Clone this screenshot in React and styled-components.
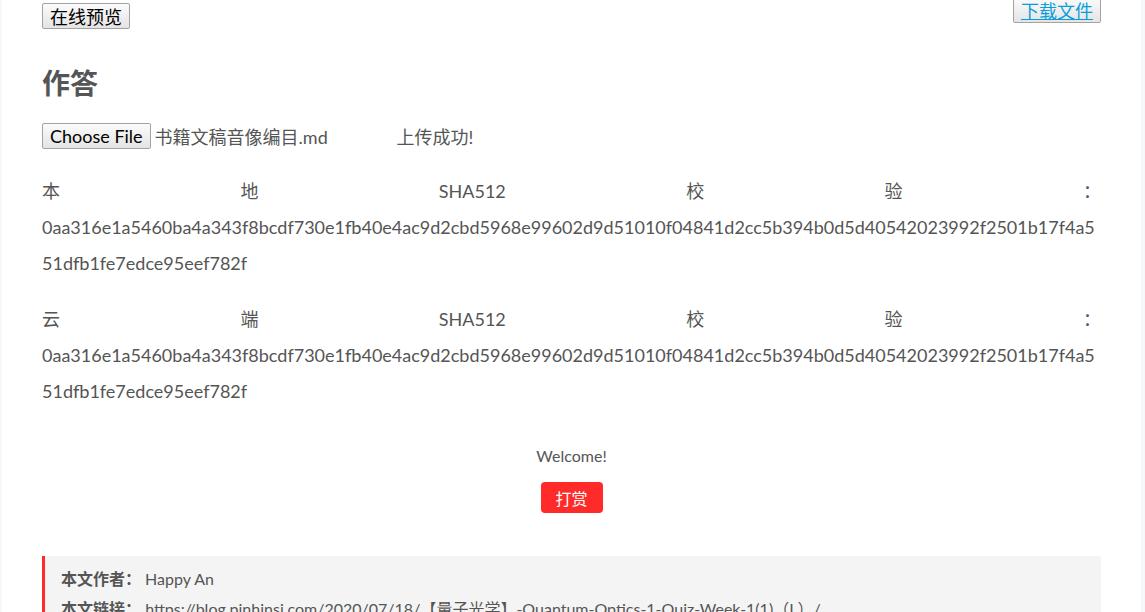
import React from "react";
import styled, { createGlobalStyle } from "styled-components";

const GlobalStyle = createGlobalStyle`
  html, body {
    margin: 0;
    padding: 0;
    background: #f5f7f9;
    overflow: hidden;
  }
  body {
    font-family: Lato, "Noto Sans CJK SC", sans-serif;
    color: #555;
  }
`;

const Page = styled.div`
  margin: 0 4px 0 2px;
  min-height: 612px;
  background: #fff;
  padding: 0 40px;
  box-sizing: border-box;
`;

const Toolbar = styled.div`
  display: flex;
  justify-content: space-between;
  align-items: flex-start;
  margin-top: -3px;
`;

const NativeButton = styled.button`
  font-family: "Noto Sans CJK SC", sans-serif;
  font-size: 18px;
  line-height: 22px;
  height: 26px;
  width: 88px;
  padding: 0;
  margin-top: ${(p) => p.$offset || 0}px;
  color: #000;
  background: linear-gradient(#fbfbfb, #e4e4e4);
  border: 1px solid #a3a3a3;
  border-radius: 2px;
  cursor: pointer;

  a {
    color: #0a9ddb;
    text-decoration: underline;
  }
`;

const Heading = styled.h2`
  margin: 34px 0 0;
  font-size: 28px;
  line-height: 40px;
  font-weight: 700;
  color: #555;
`;

const FileRow = styled.div`
  display: flex;
  align-items: center;
  margin-top: 20px;
  font-size: 18px;
  height: 26px;
`;

const FileButton = styled.span`
  display: inline-flex;
  align-items: center;
  height: 26px;
  box-sizing: border-box;
  padding: 0 7px;
  font-family: Lato, sans-serif;
  font-size: 18px;
  color: #000;
  background: linear-gradient(#fbfbfb, #e4e4e4);
  border: 1px solid #a3a3a3;
  border-radius: 2px;
`;

const FileName = styled.span`
  margin-left: 4px;
  width: 242px;
  color: #555;
`;

const Status = styled.span`
  font-size: 18px;
`;

const HashPara = styled.p`
  margin: ${(p) => p.$top}px 0 0;
  font-size: 18px;
  line-height: 36px;
  text-align: justify;
  overflow-wrap: break-word;
`;

const Reward = styled.div`
  display: flex;
  flex-direction: column;
  align-items: center;
  margin-top: 36px;
`;

const RewardNote = styled.div`
  font-size: 16px;
  line-height: 22px;
`;

const RewardButton = styled.button`
  margin-top: 15px;
  width: 62px;
  height: 31px;
  border: none;
  border-radius: 4px;
  background: #ff2a2a;
  color: #fff;
  font-family: "Noto Sans CJK SC", sans-serif;
  font-size: 16px;
  cursor: pointer;
`;

const Copyright = styled.ul`
  list-style: none;
  margin: 43px 0 0;
  padding: 8px 16px;
  background: #f4f4f4;
  border-left: 3px solid #ff2a2a;
  font-size: 16px;
  line-height: 30px;
`;

const Label = styled.strong`
  font-weight: 700;
`;

const hash =
  "0aa316e1a5460ba4a343f8bcdf730e1fb40e4ac9d2cbd5968e99602d9d51010f04841d2cc5b394b0d5d40542023992f2501b17f4a551dfb1fe7edce95eef782f";

export default function App() {
  return (
    <>
      <GlobalStyle />
      <Page>
        <Toolbar>
          <NativeButton $offset={6}>在线预览</NativeButton>
          <NativeButton>
            <a>下载文件</a>
          </NativeButton>
        </Toolbar>

        <Heading>作答</Heading>

        <FileRow>
          <FileButton>Choose File</FileButton>
          <FileName>书籍文稿音像编目.md</FileName>
          <Status>上传成功!</Status>
        </FileRow>

        <HashPara $top={24}>本地SHA512校验：{hash}</HashPara>
        <HashPara $top={20}>云端SHA512校验：{hash}</HashPara>

        <Reward>
          <RewardNote>Welcome!</RewardNote>
          <RewardButton>打赏</RewardButton>
        </Reward>

        <Copyright>
          <li>
            <Label>本文作者：</Label> Happy An
          </li>
          <li>
            <Label>本文链接：</Label>{" "}
            https://blog.pinhinsi.com/2020/07/18/【量子光学】-Quantum-Optics-1-Quiz-Week-1(1)（L）/
          </li>
        </Copyright>
      </Page>
    </>
  );
}
